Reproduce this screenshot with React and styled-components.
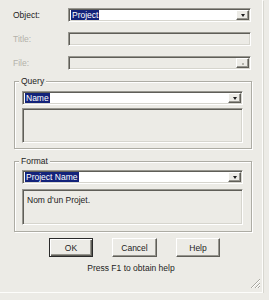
import styled, { createGlobalStyle } from "styled-components";

const GlobalStyle = createGlobalStyle`
    body {
        margin: 0;
        background: #ecebe6;
        font-family: "Liberation Sans", Arial, sans-serif;
        font-size: 8.5px;
        color: #1c1c1c;
    }
`;

export default function App() {
    return (
        <Dialog>
            <GlobalStyle />
            <FieldRow>
                <Label>Object:</Label>
                <Combo>
                    <Selected>Project</Selected>
                    <Arrow><Triangle /></Arrow>
                </Combo>
            </FieldRow>
            <FieldRow>
                <Label $disabled>Title:</Label>
                <Edit $disabled />
            </FieldRow>
            <FieldRow>
                <Label $disabled>File:</Label>
                <Edit $disabled>
                    <Browse><Dot /></Browse>
                </Edit>
            </FieldRow>

            <Group $pad="9px 8px 5px 7px">
                <Legend>Query</Legend>
                <Combo>
                    <Selected>Name</Selected>
                    <Arrow><Triangle /></Arrow>
                </Combo>
                <TextBox $top={3} $height={35} />
            </Group>

            <Group $pad="8px 8px 6px 7px" $top={12}>
                <Legend>Format</Legend>
                <Combo>
                    <Selected>Project Name</Selected>
                    <Arrow><Triangle /></Arrow>
                </Combo>
                <TextBox $top={5} $height={36}>Nom d'un Projet.</TextBox>
            </Group>

            <Buttons>
                <Button $default>OK</Button>
                <Button $wide>Cancel</Button>
                <Button>Help</Button>
            </Buttons>
            <Hint>Press F1 to obtain help</Hint>
            <Grip width="11" height="11" viewBox="0 0 11 11">
                <path d="M10 1 L1 10 M10 5 L5 10 M10 8 L8 10" stroke="#a8a79f" strokeWidth="1" />
                <path d="M10 2 L2 10 M10 6 L6 10 M10 9 L9 10" stroke="#ffffff" strokeWidth="1" />
            </Grip>
        </Dialog>
    );
}

const Dialog = styled.div`
    position: relative;
    box-sizing: border-box;
    width: 263px;
    height: 293px;
    padding-top: 8px;
    display: flex;
    flex-direction: column;
    border-right: 1px solid #fdfdfb;
    border-bottom: 1px solid #fdfdfb;
    box-shadow: 1px 1px 0 #d8d7d0;
`;

const FieldRow = styled.div`
    display: grid;
    grid-template-columns: 55px 183px;
    align-items: center;
    height: 14px;
    padding-left: 13px;
    margin-bottom: 10px;
    &:nth-of-type(3) { margin-bottom: 0; }
`;

const Label = styled.span`
    color: ${p => p.$disabled ? "#b3b2aa" : "#1c1c1c"};
    line-height: 10px;
`;

const sunken = `
    box-sizing: border-box;
    border: 1px solid;
    border-color: #97968f #ffffff #ffffff #97968f;
    box-shadow: inset 1px 1px 0 #5f5e58, inset -1px -1px 0 #d6d5ce;
`;

const Combo = styled.div`
    ${sunken}
    height: 14px;
    padding: 1px;
    background: #fff;
    display: flex;
    align-items: center;
`;

const Edit = styled.div`
    ${sunken}
    height: 14px;
    padding: 1px;
    background: #ecebe6;
    display: flex;
    justify-content: flex-end;
`;

const Selected = styled.span`
    margin-left: 1px;
    padding: 0 1px;
    background: #13237a;
    color: #fff;
    line-height: 10px;
    height: 10px;
`;

const Arrow = styled.div`
    margin-left: auto;
    box-sizing: border-box;
    width: 13px;
    height: 10px;
    background: #ecebe6;
    border: 1px solid;
    border-color: #fff #5f5e58 #5f5e58 #fff;
    box-shadow: inset -1px -1px 0 #97968f;
    display: flex;
    align-items: center;
    justify-content: center;
`;

const Browse = styled(Arrow)``;

const Triangle = styled.span`
    width: 0;
    height: 0;
    border-left: 2.5px solid transparent;
    border-right: 2.5px solid transparent;
    border-top: 3px solid #1c1c1c;
`;

const Dot = styled.span`
    width: 2px;
    height: 2px;
    margin-top: 2px;
    background: #b4b3ab;
`;

const Group = styled.div`
    position: relative;
    margin: ${p => p.$top || 11}px 10px 0 14px;
    padding: ${p => p.$pad};
    border: 1px solid #adaca4;
    box-shadow: inset 1px 1px 0 #fff, 1px 1px 0 #fff;
    display: flex;
    flex-direction: column;
`;

const Legend = styled.span`
    position: absolute;
    top: -6px;
    left: 4px;
    padding: 0 2px;
    line-height: 10px;
    background: #ecebe6;
`;

const TextBox = styled.div`
    ${sunken}
    margin-top: ${p => p.$top}px;
    height: ${p => p.$height}px;
    padding: 5px 4px;
    background: #ecebe6;
    line-height: 10px;
`;

const Buttons = styled.div`
    display: flex;
    gap: 19px;
    padding-left: 49px;
    margin-top: 6px;
`;

const Button = styled.div`
    box-sizing: border-box;
    width: ${p => p.$wide ? 45 : 44}px;
    height: 19px;
    display: flex;
    align-items: center;
    justify-content: center;
    background: #ecebe6;
    border: 1px solid;
    border-color: ${p => p.$default ? "#2a2a2a" : "#fff #5f5e58 #5f5e58 #fff"};
    box-shadow: ${p => p.$default
        ? "inset 1px 1px 0 #fff, inset -1px -1px 0 #5f5e58, inset -2px -2px 0 #97968f"
        : "inset -1px -1px 0 #97968f"};
    line-height: 10px;
`;

const Hint = styled.div`
    margin-top: 6px;
    line-height: 10px;
    text-align: center;
`;

const Grip = styled.svg`
    position: absolute;
    right: 1px;
    bottom: 3px;
`;
